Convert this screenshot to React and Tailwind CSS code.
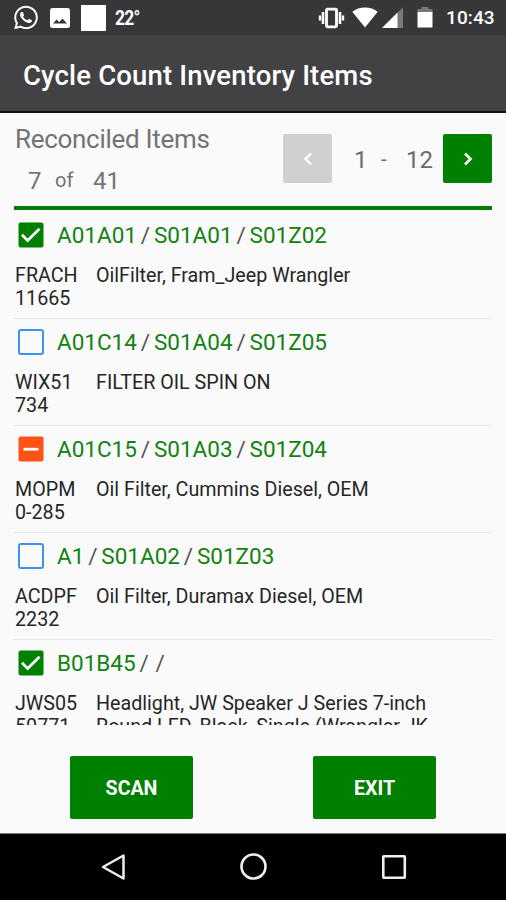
import React from "react";
import { FaWhatsapp } from "react-icons/fa";

const items = [
  { state: "checked", loc: ["A01A01", "S01A01", "S01Z02"], code: ["FRACH", "11665"], desc: ["OilFilter, Fram_Jeep Wrangler"] },
  { state: "empty", loc: ["A01C14", "S01A04", "S01Z05"], code: ["WIX51", "734"], desc: ["FILTER OIL SPIN ON"] },
  { state: "partial", loc: ["A01C15", "S01A03", "S01Z04"], code: ["MOPM", "0-285"], desc: ["Oil Filter, Cummins Diesel, OEM"] },
  { state: "empty", loc: ["A1", "S01A02", "S01Z03"], code: ["ACDPF", "2232"], desc: ["Oil Filter, Duramax Diesel, OEM"] },
  { state: "checked", loc: ["B01B45", "", ""], code: ["JWS05", "50771"], desc: ["Headlight, JW Speaker J Series 7-inch", "Round LED, Black, Single (Wrangler JK"] },
];

function Checkbox({ state }) {
  if (state === "empty") {
    return <span className="h-[26px] w-[26px] shrink-0 rounded-[3px] border-2 border-[#3b93ec]" />;
  }
  return (
    <svg className="h-[26px] w-[26px] shrink-0" viewBox="0 0 26 26" fill="none">
      <rect x="0.5" y="0.5" width="25" height="25" rx="2" fill={state === "checked" ? "#008000" : "#fd5316"} />
      {state === "checked" ? (
        <path d="M4 12.8l5.600 5.800L21.500 6.800" stroke="#fff" strokeWidth="2.800" />
      ) : (
        <path d="M5.500 13.200h15" stroke="#fff" strokeWidth="2.800" />
      )}
    </svg>
  );
}

function Item({ item }) {
  const [a, b, c] = item.loc;
  return (
    <li className="h-[107px] shrink-0 border-b border-[#e8e8e8] pt-[10px]">
      <div className="flex h-[26px] items-center pl-1">
        <Checkbox state={item.state} />
        <div className="ml-[13px] flex text-[22.5px] leading-[26px] whitespace-pre text-[#128212]">
          <span>{a}</span>
          <span className="w-[17px] text-center text-[#555]">/</span>
          <span>{b}</span>
          <span className={b ? "w-[17px] text-center text-[#555]" : "w-[15px] text-center text-[#555]"}>/</span>
          <span>{c}</span>
        </div>
      </div>
      <div className="mt-[16px] flex pl-px text-[19.7px] leading-[23px] whitespace-nowrap text-[#262626]">
        <div className="w-[81px] shrink-0">
          {item.code.map((t) => <div key={t}>{t}</div>)}
        </div>
        <div>{item.desc.map((t) => <div key={t}>{t}</div>)}</div>
      </div>
    </li>
  );
}

function StatusBar() {
  return (
    <div className="flex h-[35px] items-center bg-[#373739] text-white">
      <FaWhatsapp className="ml-[13px] h-[27px] w-[26px] shrink-0" />
      <svg className="ml-[11px] h-5 w-5 shrink-0" viewBox="0 0 20 20">
        <rect width="20" height="20" rx="2.5" fill="#fff" />
        <path d="M3 15.500l3.500-4 2.700 2.600 3.300-3.500 4.500 4.900z" fill="#373739" />
      </svg>
      <span className="ml-[11px] h-[26px] w-[25px] shrink-0 bg-white" />
      <span className="mt-[2px] ml-[9px] w-[26px] origin-left scale-x-85 text-[20.5px] font-bold tracking-[-0.9px]">22°</span>
      <svg className="ml-[177px] h-[22px] w-[28px] shrink-0" viewBox="0 0 28 22" fill="none" stroke="#fff">
        <rect x="8.500" y="2.200" width="10" height="17.600" rx="1" strokeWidth="2.800" />
        <path d="M5 5v12M22 5v12" strokeWidth="2.600" />
        <path d="M2 8.500v5M25 8.500v5" strokeWidth="2.400" />
      </svg>
      <svg className="ml-[6px] h-[21px] w-[26px] shrink-0" viewBox="0 0 26 21" fill="#fff">
        <path d="M0.300 4.800C3.800 2 8 0.500 13 0.500s9.200 1.500 12.700 4.300L13 20.500z" />
      </svg>
      <svg className="ml-[4px] h-[21px] w-[21px] shrink-0" viewBox="0 0 21 21">
        <path d="M21 0.300v20.700H0z" fill="#79797b" />
        <path d="M15.500 5.500V21H0z" fill="#fff" />
      </svg>
      <svg className="mb-[2px] ml-[14px] h-[22px] w-[16px] shrink-0" viewBox="0 0 16 22">
        <path d="M4.500 1h7v2H15.500v3H0.500V3h4z" fill="#79797b" />
        <path d="M0.500 6h15v15.500h-15z" fill="#fff" />
      </svg>
      <span className="mt-[2px] ml-[13px] text-[19px] font-medium tracking-[0.100px]">10:43</span>
    </div>
  );
}

export default function App() {
  return (
    <div className="flex h-[900px] w-[506px] flex-col overflow-hidden bg-[#fafafa] font-['Roboto',sans-serif]">
      <StatusBar />
      <header className="flex h-[78px] items-center border-b-2 border-[#111] bg-[#424244] pt-[6px] pl-[23px]">
        <h1 className="text-[27.5px] font-medium tracking-[0.16px] whitespace-nowrap text-white">Cycle Count Inventory Items</h1>
      </header>

      <section className="mx-[14px] flex h-[97px] border-b-4 border-[#007a00]">
        <div className="w-[269px] text-[#737373]">
          <div className="pt-[10px] pl-px text-[26px] leading-[32px] tracking-[-0.3px] whitespace-nowrap">Reconciled Items</div>
          <div className="mt-[10px] flex pl-[14px] text-[24px] leading-[32px]">
            <span className="w-[27px]">7</span>
            <span className="w-[38px] text-[20px] leading-[30px]">of</span>
            <span>41</span>
          </div>
        </div>
        <button className="mt-[21px] flex h-[49px] w-[49px] items-center justify-center rounded-[2px] bg-[#d0d0d0]">
          <svg className="h-[14px] w-[10px]" viewBox="0 0 10 14" fill="none" stroke="#fff" strokeWidth="2.4"><path d="M8 1.500L2.500 7 8 12.500" /></svg>
        </button>
        <div className="mt-[31px] flex w-[111px] pl-[22px] text-[24px] leading-[32px] text-[#6c6c6c]">
          <span className="w-[27px]">1</span>
          <span className="w-[25px] text-[20px] leading-[31px]">-</span>
          <span>12</span>
        </div>
        <button className="mt-[21px] flex h-[49px] w-[49px] items-center justify-center rounded-[2px] bg-[#008000]">
          <svg className="h-[14px] w-[10px]" viewBox="0 0 10 14" fill="none" stroke="#fff" strokeWidth="2.600"><path d="M2 1.500L7.500 7 2 12.500" /></svg>
        </button>
      </section>

      <ul className="mx-[14px] mt-[2px] flex h-[513px] flex-col overflow-hidden">
        {items.map((item) => <Item key={item.loc[0]} item={item} />)}
      </ul>

      <footer className="mt-[31px] flex h-[77px] items-start justify-between pr-[70px] pl-[70px]">
        <button className="h-[63px] w-[123px] rounded-[2px] bg-[#008000] pt-[3px] text-[19.600px] font-bold text-white">SCAN</button>
        <button className="h-[63px] w-[123px] rounded-[2px] bg-[#008000] pt-[3px] text-[19.600px] font-bold text-white">EXIT</button>
      </footer>

      <nav className="flex h-[67px] items-center justify-between border-t border-[#777] bg-black pr-[98px] pl-[100px]">
        <svg className="h-7 w-7" viewBox="0 0 28 28" fill="none" stroke="#eee" strokeWidth="2.500" strokeLinejoin="round"><path d="M23.500 2.500v23L3 14z" /></svg>
        <svg className="h-7 w-7" viewBox="0 0 28 28" fill="none" stroke="#eee" strokeWidth="2.600"><circle cx="13.500" cy="13.500" r="12" /></svg>
        <svg className="h-7 w-7" viewBox="0 0 28 28" fill="none" stroke="#eee" strokeWidth="2.600"><rect x="3.300" y="3.300" width="21.500" height="21.500" rx="0.500" /></svg>
      </nav>
    </div>
  );
}
